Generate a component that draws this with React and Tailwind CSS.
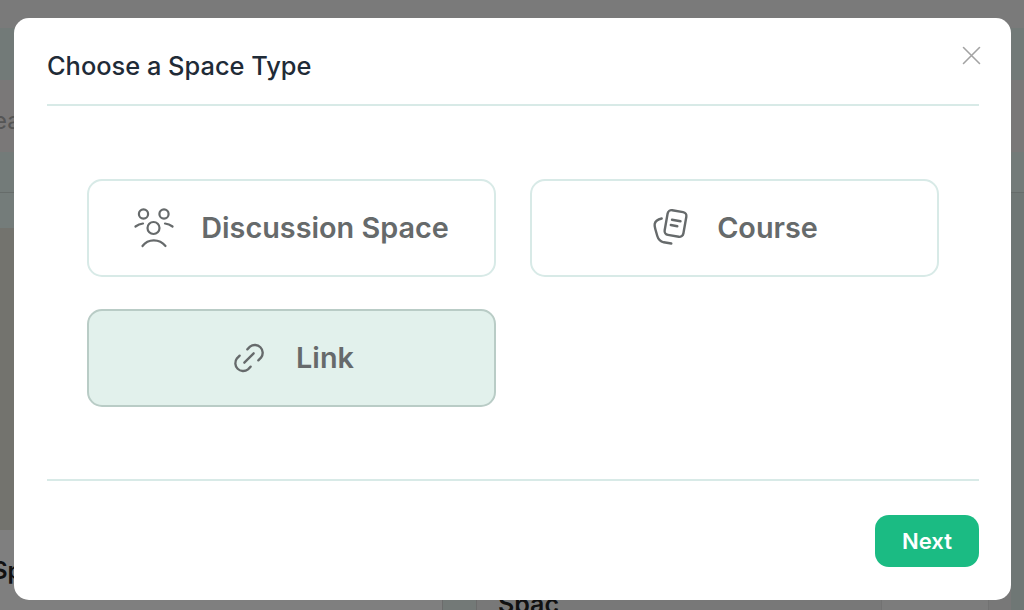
import React from "react";

const font = "font-['Inter','Liberation_Sans',sans-serif]";

const PeopleIcon = () => (
  <svg width="40" height="40" viewBox="0 0 40 40" fill="none" stroke="#666a6b" strokeWidth="2.2" strokeLinecap="round">
    <circle cx="9.500" cy="6" r="4.600" />
    <circle cx="30" cy="6" r="4.600" />
    <circle cx="19.500" cy="20" r="6" />
    <path d="M1.500 18.500c2.200-1.600 4.500-2.600 7.500-3" />
    <path d="M38.500 18.500c-2.200-1.600-4.500-2.600-7.500-3" />
    <path d="M8.500 38c5.500-7.500 17-7.500 23 0" />
  </svg>
);

const CourseIcon = () => (
  <svg width="40" height="40" viewBox="0 0 40 40" fill="none" stroke="#666a6b" strokeWidth="2.400" strokeLinecap="round" strokeLinejoin="round">
    <rect x="15" y="3" width="19" height="25" rx="4" transform="rotate(10 24.500 15.500)" />
    <path d="M21 11.800l8.500 1.500" />
    <path d="M19.800 17l6.500 1.200" />
    <path d="M10.700 10.500c-3.500.8-6.500 2.500-7 5.500-.3 1.700.2 3.500.6 5l2 7c1 3.500 3.200 5.500 6.500 6.300l7.500 1.200" />
  </svg>
);

const LinkIcon = () => (
  <svg width="40" height="40" viewBox="0 0 24 24" fill="none" stroke="#666a6b" strokeWidth="1.400" strokeLinecap="round" strokeLinejoin="round">
    <path d="M9.200 14.800l5.600-5.600" />
    <path d="M11 6.800l1.600-1.600a4.700 4.700 0 0 1 6.600 6.600l-1.600 1.600" />
    <path d="M13 17.200l-1.600 1.600a4.700 4.700 0 0 1-6.600-6.600l1.600-1.600" />
  </svg>
);

const TypeCard = ({ icon, label, active, gap }) => (
  <button
    className={`h-[97.500px] rounded-[15px] border-2 flex items-center justify-center ${gap} ${
      active ? "bg-[#e2f1ec] border-[#b9ccc6]" : "bg-white border-[#d8eae7]"
    }`}
  >
    {icon}
    <span className="pt-[2px] text-[28.800px] leading-none font-semibold text-[#666a6b]">{label}</span>
  </button>
);

export default function App() {
  return (
    <div className={`relative w-[1024px] h-[610px] overflow-hidden bg-[#727a78] ${font}`}>
      {/* dimmed page behind the modal */}
      <div className="h-[28px] bg-[#7a7a7a]" />
      <div className="h-[52px] bg-[#727a78]" />
      <div className="h-[72px] bg-[#7a7878] pt-[26px] pl-[1px] text-[24px] leading-[30px] text-[#555]">
        <span className="ml-[-8px]">ea</span>
      </div>
      <div className="h-[41px] bg-[#737b79] border-b border-[#666c6a]" />
      <div className="flex h-[417px]">
        <div className="w-[442px] flex flex-col">
          <div className="h-[35px] bg-[#747c7a]" />
          <div className="h-[302px] bg-[#73736e]" />
          <div className="h-[80px] bg-[#7f7f7f] pt-[26px] pl-[1px] text-[24px] leading-[30px] font-semibold text-[#111]">
            <span className="ml-[-9px]">Sp</span>
          </div>
        </div>
        <div className="w-[35px] bg-[#737977] border-x border-[#6c6c6c]" />
        <div className="w-[534px] bg-[#787878] flex items-start pt-[396px]">
          <div className="ml-[21px] text-[25px] leading-[30px] font-semibold text-[#111]">Spac</div>
          <div className="ml-[322px] w-[108px] h-[40px] mt-[-4px] rounded-[12px] bg-[#7c7c7c] border border-[#727272]" />
        </div>
        <div className="flex-1 bg-[#6f7775]" />
      </div>

      {/* modal */}
      <div className="absolute left-[14px] top-[18px] w-[997px] h-[582px] bg-white rounded-[15px] pl-[33px] pr-[32px] flex flex-col">
        <div className="h-[88px] shrink-0 border-b-2 border-[#d8eae7] flex items-start justify-between">
          <h2 className="mt-[32px] text-[25.400px] leading-[32px] font-medium text-[#1f2b37]">Choose a Space Type</h2>
          <svg className="mt-[27px] mr-[-2px]" width="20" height="20" viewBox="0 0 20 20" stroke="#a3a3a3" strokeWidth="1.600" strokeLinecap="round">
            <path d="M2.500 2.500l16 16M18.500 2.500l-16 16" />
          </svg>
        </div>

        <div className="h-[375px] shrink-0 border-b-2 border-[#d8eae7] pl-[40px] pt-[73px]">
          <div className="grid grid-cols-2 gap-x-[34px] gap-y-[32.500px] w-[852px]">
            <TypeCard icon={<PeopleIcon />} label="Discussion Space" gap="gap-[27px]" />
            <TypeCard icon={<CourseIcon />} label="Course" gap="gap-[26px]" />
            <TypeCard icon={<LinkIcon />} label="Link" gap="gap-[27px]" active />
          </div>
        </div>

        <div className="flex justify-end pt-[34px]">
          <button className="w-[104px] h-[52px] rounded-[14px] bg-[#1bbb83] text-white text-[22px] font-semibold">Next</button>
        </div>
      </div>
    </div>
  );
}
